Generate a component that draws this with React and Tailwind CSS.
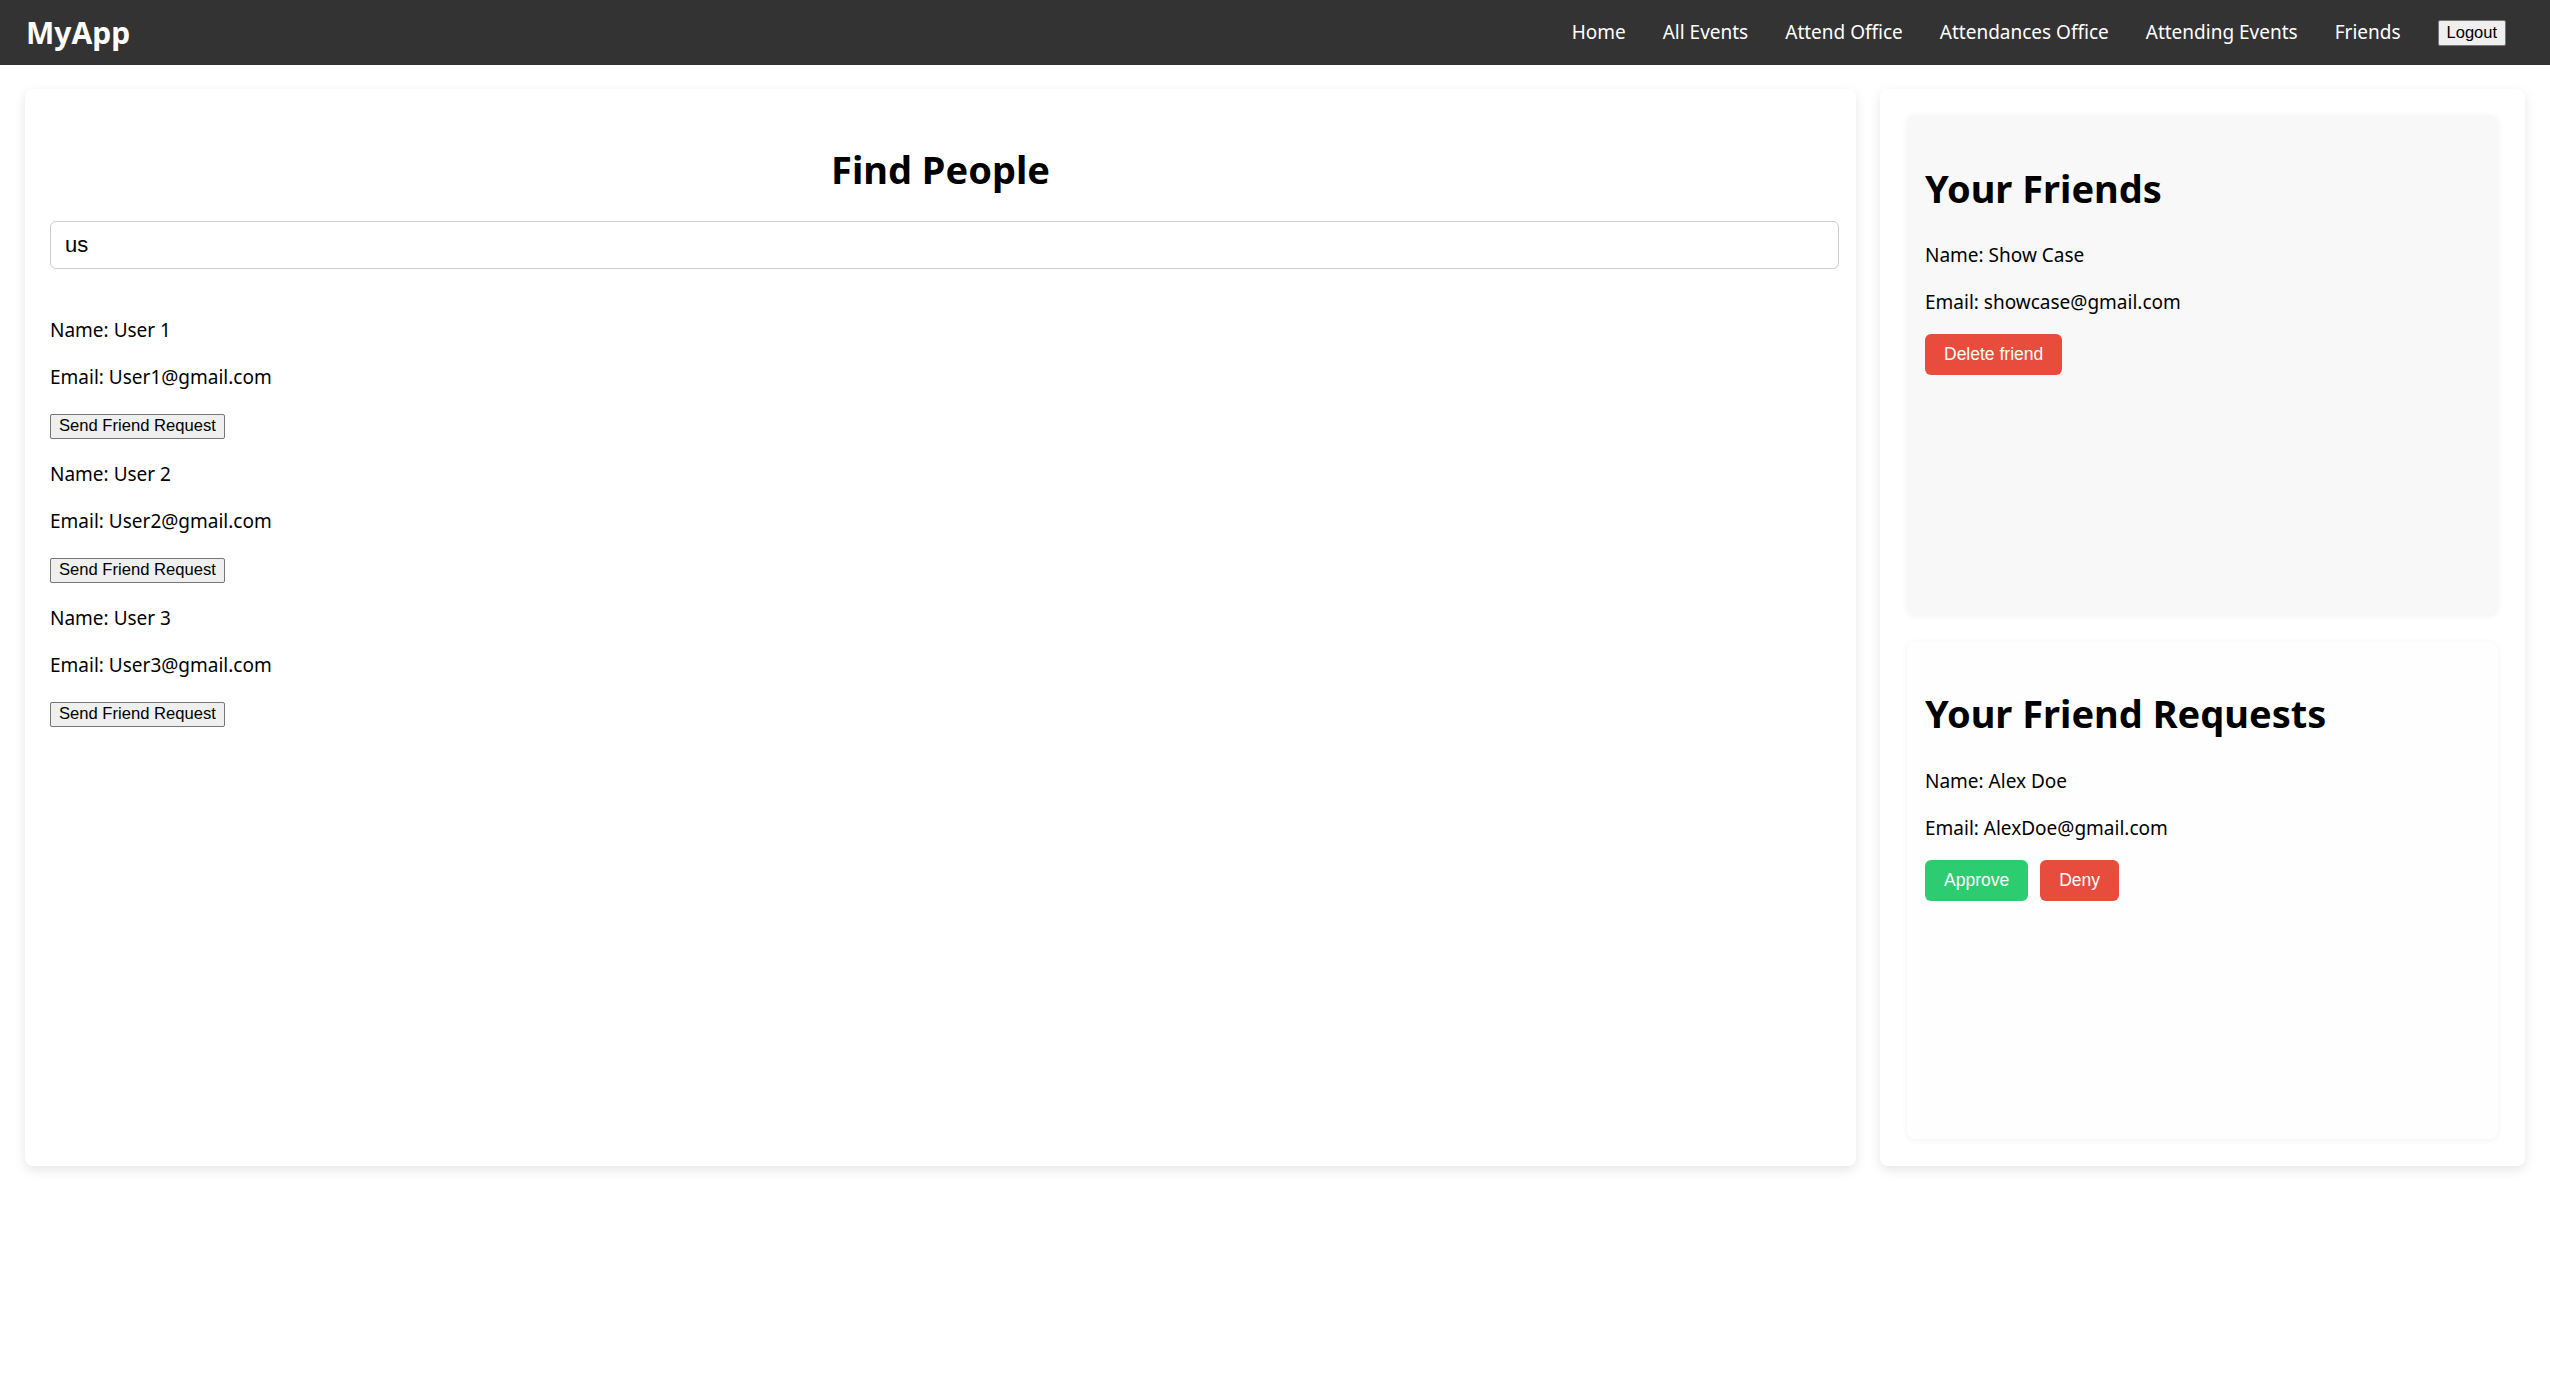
import { useState } from 'react';

const navLinks = ['Home', 'All Events', 'Attend Office', 'Attendances Office', 'Attending Events', 'Friends'];

const people = [
  { name: 'User 1', email: 'User1@gmail.com' },
  { name: 'User 2', email: 'User2@gmail.com' },
  { name: 'User 3', email: 'User3@gmail.com' },
];

const sans = "font-['Noto_Sans',sans-serif]";
const arial = "font-['Liberation_Sans',Arial,sans-serif]";

function Navbar() {
  return (
    <nav className="h-[65px] bg-[#333333] flex items-center justify-between pl-[26px] pr-[44px]">
      <span className={`${sans} text-[30px] font-bold text-white leading-none`}>MyApp</span>
      <div className="flex items-center gap-[37px]">
        {navLinks.map((link) => (
          <a key={link} href="#" className={`${sans} text-[19px] text-white leading-none`}>
            {link}
          </a>
        ))}
        <button className={`${arial} h-[26px] px-[8px] text-[16.5px] leading-none text-black bg-[#efefef] border border-[#767676] rounded-[2px]`}>
          Logout
        </button>
      </div>
    </nav>
  );
}

function FindPeople() {
  const [query, setQuery] = useState('us');

  return (
    <div className="flex-1 bg-white rounded-[8px] shadow-[0_4px_12px_rgba(0,0,0,0.1)] p-[25px]">
      <h2 className={`${sans} mt-[32px] text-[38px] leading-[46px] font-bold text-black text-center`}>Find People</h2>
      <input
        value={query}
        onChange={(e) => setQuery(e.target.value)}
        className={`${arial} mt-[29px] block w-[calc(100%+8px)] h-[48px] pl-[14px] text-[22px] text-black border border-[#cccccc] rounded-[6px] outline-none`}
      />
      <div className="mt-[48px] flex flex-col gap-[22px]">
        {people.map((p) => (
          <div key={p.email} className="flex flex-col items-start">
            <p className={`${sans} text-[19px] leading-[26px] text-black`}>Name: {p.name}</p>
            <p className={`${sans} mt-[21px] text-[19px] leading-[26px] text-black`}>Email: {p.email}</p>
            <button className={`${arial} mt-[24px] h-[25px] px-[8px] text-[16.6px] leading-none text-black bg-[#efefef] border border-[#767676] rounded-[2px]`}>
              Send Friend Request
            </button>
          </div>
        ))}
      </div>
    </div>
  );
}

function ActionButton({ color, children }) {
  return (
    <button className={`${arial} h-[41px] px-[19px] text-[17.5px] leading-none text-white rounded-[6px] ${color}`}>
      {children}
    </button>
  );
}

function Sidebar() {
  return (
    <div className="w-[645px] shrink-0 bg-white rounded-[8px] shadow-[0_4px_12px_rgba(0,0,0,0.1)] px-[27px] pt-[26px] pb-[27px] flex flex-col gap-[27px]">
      <section className="h-[500px] bg-[#f8f8f8] rounded-[8px] shadow-[0_1px_6px_rgba(0,0,0,0.06)] px-[18px] pt-[50px]">
        <h2 className={`${sans} text-[38px] leading-[46px] font-bold text-black`}>Your Friends</h2>
        <p className={`${sans} mt-[31px] text-[19px] leading-[26px] text-black`}>Name: Show Case</p>
        <p className={`${sans} mt-[21px] text-[19px] leading-[26px] text-black`}>Email: showcase@gmail.com</p>
        <div className="mt-[19px]">
          <ActionButton color="bg-[#e74c3c]">Delete friend</ActionButton>
        </div>
      </section>
      <section className="h-[497px] bg-[#fefefe] rounded-[8px] shadow-[0_1px_6px_rgba(0,0,0,0.06)] px-[18px] pt-[48px]">
        <h2 className={`${sans} text-[38px] leading-[46px] font-bold text-black`}>Your Friend Requests</h2>
        <p className={`${sans} mt-[32px] text-[19px] leading-[26px] text-black`}>Name: Alex Doe</p>
        <p className={`${sans} mt-[21px] text-[19px] leading-[26px] text-black`}>Email: AlexDoe@gmail.com</p>
        <div className="mt-[19px] flex gap-[12px]">
          <ActionButton color="bg-[#2ecc71]">Approve</ActionButton>
          <ActionButton color="bg-[#e74c3c]">Deny</ActionButton>
        </div>
      </section>
    </div>
  );
}

export default function App() {
  return (
    <div className="min-h-screen bg-white">
      <Navbar />
      <main className="flex items-stretch gap-[24px] px-[25px] pt-[24px]">
        <FindPeople />
        <Sidebar />
      </main>
    </div>
  );
}
